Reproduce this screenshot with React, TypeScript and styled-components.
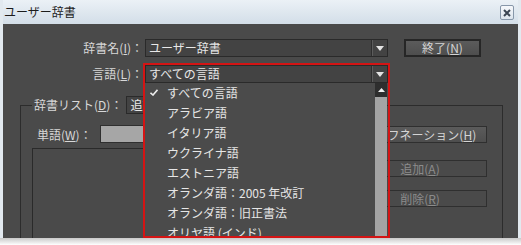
import React from 'react';
import styled, { createGlobalStyle } from 'styled-components';

const GlobalStyle = createGlobalStyle`
  html, body {
    margin: 0;
    padding: 0;
    background: #fff;
  }
  body {
    font-family: "Noto Sans CJK JP", "Noto Sans", sans-serif;
    font-size: 12px;
  }
`;

const Frame = styled.div`
  width: 521px;
  height: 245px;
  display: flex;
  flex-direction: column;
  overflow: hidden;
  background: #fff;
`;

const Window = styled.div`
  width: 521px;
  height: 238px;
  box-sizing: border-box;
  display: flex;
  flex-direction: column;
  border-left: 3px solid #e2e9ef;
  border-right: 3px solid #e2e9ef;
  background: #e2e9ef;
`;

const TitleBar = styled.div`
  height: 24px;
  flex: none;
  display: flex;
  justify-content: space-between;
  align-items: flex-start;
  padding: 0 4px 0 1px;
  background: linear-gradient(#ebf1f6, #d3dee8);
  color: #1c1c1c;
`;

const Title = styled.span`
  font-size: 12px;
  line-height: 24px;
`;

const CloseButton = styled.div`
  width: 14px;
  height: 15px;
  margin-top: 5px;
  box-sizing: border-box;
  border: 1px solid #8797a9;
  border-radius: 2px;
  background: linear-gradient(#f6f8fb, #dce4ec);
  display: flex;
  align-items: center;
  justify-content: center;
`;

const Body = styled.div`
  position: relative;
  flex: 1;
  overflow: hidden;
  background: #4a4a4a;
  padding-top: 15px;
  box-sizing: border-box;
  color: #d8d8d8;
`;

const TopForm = styled.div`
  display: grid;
  grid-template-columns: 142px 243px 93px;
  grid-template-rows: 18px 18px;
  column-gap: 0;
  row-gap: 8px;
`;

const Label = styled.div`
  text-align: right;
  padding-right: 2px;
  line-height: 18px;
  white-space: nowrap;
`;

const U = styled.span`
  text-decoration: underline;
  text-underline-offset: 1px;
`;

const Select = styled.div<{ $width?: number }>`
  position: relative;
  height: 18px;
  width: ${(p) => (p.$width ? `${p.$width}px` : 'auto')};
  box-sizing: border-box;
  border: 1px solid #2a2a2a;
  background: #434343;
  color: #e8e8e8;
  line-height: 16px;
  padding-left: 3px;
  white-space: nowrap;
  overflow: hidden;
  display: flex;
`;

const SelectText = styled.span`
  flex: 1;
  overflow: hidden;
`;

const SelectArrow = styled.div`
  width: 15px;
  flex: none;
  border-left: 1px solid #2e2e2e;
  box-shadow: inset 1px 0 0 #5c5c5c;
  display: flex;
  align-items: center;
  justify-content: center;
`;

const Button = styled.div<{ $disabled?: boolean; $strong?: boolean }>`
  height: ${(p) => (p.$strong ? 18 : 17)}px;
  box-sizing: border-box;
  border: ${(p) => (p.$strong ? '2px solid #262626' : '1px solid #2f2f2f')};
  background: ${(p) =>
    p.$disabled ? '#4a4a4a' : 'linear-gradient(#5b5b5b, #4e4e4e)'};
  color: ${(p) => (p.$disabled ? '#8c8c8c' : '#d4d4d4')};
  display: flex;
  align-items: center;
  justify-content: center;
  white-space: nowrap;
  line-height: 1;
`;

const TopButton = styled(Button)`
  margin-left: 16px;
`;

const Group = styled.fieldset`
  margin: 13px 15px 0 17px;
  padding: 0 15px 0 11px;
  border: 1px solid #2c2c2c;
  min-width: 0;
  height: 160px;
`;

const Legend = styled.legend`
  padding: 0 0 0 2px;
  display: flex;
  align-items: center;
  gap: 4px;
  line-height: 18px;
`;

const GroupContent = styled.div`
  display: grid;
  grid-template-columns: 1fr 134px;
  column-gap: 10px;
`;

const LeftColumn = styled.div`
  display: flex;
  flex-direction: column;
  padding-top: 11px;
`;

const WordRow = styled.div`
  display: flex;
  align-items: center;
  height: 18px;
`;

const WordLabel = styled.span`
  width: 63px;
  margin-left: 5px;
  white-space: nowrap;
`;

const WordInput = styled.div`
  flex: 1;
  height: 18px;
  box-sizing: border-box;
  border: 1px solid #2f2f2f;
  background: #a6a6a6;
`;

const ListBox = styled.div`
  margin-top: 5px;
  height: 110px;
  border: 1px solid #2a2a2a;
  background: #4a4a4a;
`;

const RightColumn = styled.div`
  display: flex;
  flex-direction: column;
  padding-top: 12px;
`;

const SideButton = styled(Button)<{ $gap: number }>`
  margin-top: ${(p) => p.$gap}px;
`;

const Highlight = styled.div`
  position: absolute;
  left: 140px;
  top: 39px;
  width: 247px;
  height: 175px;
  box-sizing: border-box;
  border: 2px solid #d41414;
  pointer-events: none;
`;

const Popup = styled.div`
  position: absolute;
  left: 142px;
  top: 59px;
  width: 242px;
  height: 153px;
  display: flex;
  background: #4b4b4b;
  overflow: hidden;
`;

const PopupList = styled.div`
  flex: 1;
  display: flex;
  flex-direction: column;
  margin-top: -1px;
`;

const PopupItem = styled.div`
  height: 20px;
  flex: none;
  display: flex;
  align-items: center;
  color: #e6e6e6;
  white-space: nowrap;
`;

const CheckCell = styled.span`
  width: 22px;
  flex: none;
  padding-left: 5px;
  box-sizing: border-box;
  display: flex;
  align-items: center;
`;

const ScrollBar = styled.div`
  width: 12px;
  flex: none;
  display: flex;
  flex-direction: column;
  background: #a4a4a4;
`;

const ScrollArrow = styled.div`
  height: 14px;
  background: #2e2e2e;
  display: flex;
  align-items: center;
  justify-content: center;
`;

const Fade = styled.div`
  flex: 1;
  background: linear-gradient(#c9c9c9, #fff);
`;

const DownArrow = () => (
  <svg width="8" height="5" viewBox="0 0 8 5">
    <path d="M0 0 H8 L4 5 Z" fill="#e4e4e4" />
  </svg>
);

const languages = [
  'アラビア語',
  'イタリア語',
  'ウクライナ語',
  'エストニア語',
  'オランダ語：2005 年改訂',
  'オランダ語：旧正書法',
  'オリヤ語 (インド)',
];

export default function App() {
  return (
    <>
      <GlobalStyle />
      <Frame>
        <Window>
          <TitleBar>
            <Title>ユーザー辞書</Title>
            <CloseButton>
              <svg width="8" height="8" viewBox="0 0 8 8">
                <path
                  d="M1 1 L7 7 M7 1 L1 7"
                  stroke="#3b4552"
                  strokeWidth="2"
                />
              </svg>
            </CloseButton>
          </TitleBar>
          <Body>
            <TopForm>
              <Label>
                辞書名(<U>I</U>)：
              </Label>
              <Select>
                <SelectText>ユーザー辞書</SelectText>
                <SelectArrow>
                  <DownArrow />
                </SelectArrow>
              </Select>
              <TopButton $strong>
                終了(<U>N</U>)
              </TopButton>
              <Label>
                言語(<U>L</U>)：
              </Label>
              <Select>
                <SelectText>すべての言語</SelectText>
                <SelectArrow>
                  <DownArrow />
                </SelectArrow>
              </Select>
            </TopForm>

            <Group>
              <Legend>
                <span>
                  辞書リスト(<U>D</U>)：
                </span>
                <Select $width={80}>
                  <SelectText>追加された単語</SelectText>
                </Select>
              </Legend>
              <GroupContent>
                <LeftColumn>
                  <WordRow>
                    <WordLabel>
                      単語(<U>W</U>)：
                    </WordLabel>
                    <WordInput />
                  </WordRow>
                  <ListBox />
                </LeftColumn>
                <RightColumn>
                  <SideButton $gap={0}>
                    ハイフネーション(<U>H</U>)
                  </SideButton>
                  <SideButton $gap={17} $disabled>
                    追加(<U>A</U>)
                  </SideButton>
                  <SideButton $gap={13} $disabled>
                    削除(<U>R</U>)
                  </SideButton>
                </RightColumn>
              </GroupContent>
            </Group>

            <Highlight />
            <Popup>
              <PopupList>
                <PopupItem>
                  <CheckCell>
                    <svg width="8" height="7" viewBox="0 0 8 7">
                      <path
                        d="M0.5 3.8 L3 6 L7.5 0.8"
                        fill="none"
                        stroke="#ececec"
                        strokeWidth="1.6"
                      />
                    </svg>
                  </CheckCell>
                  すべての言語
                </PopupItem>
                {languages.map((name) => (
                  <PopupItem key={name}>
                    <CheckCell />
                    {name}
                  </PopupItem>
                ))}
              </PopupList>
              <ScrollBar>
                <ScrollArrow>
                  <svg width="7" height="4" viewBox="0 0 7 4">
                    <path d="M0 4 H7 L3.5 0 Z" fill="#f0f0f0" />
                  </svg>
                </ScrollArrow>
              </ScrollBar>
            </Popup>
          </Body>
        </Window>
        <Fade />
      </Frame>
    </>
  );
}
